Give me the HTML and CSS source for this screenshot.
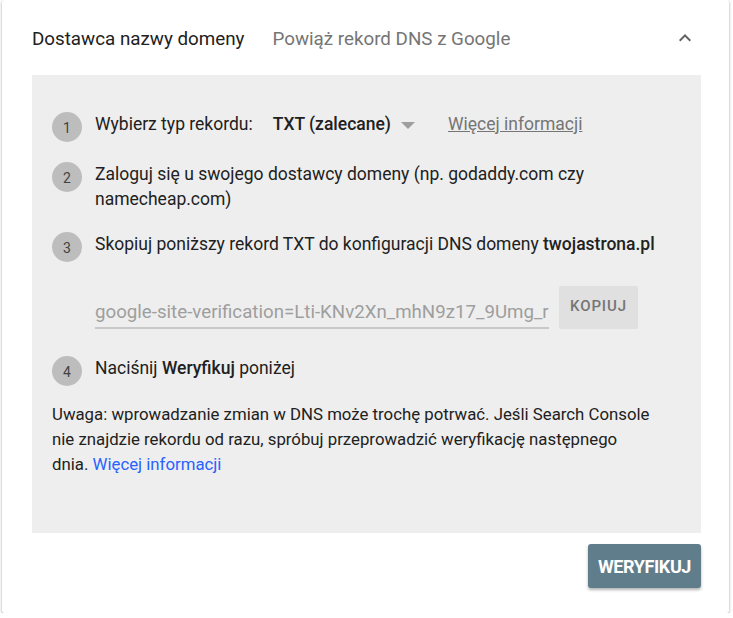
FILE: index.html
```html
<!DOCTYPE html>
<html lang="pl">
<head>
<meta charset="utf-8">
<link rel="stylesheet" href="styles.css">
</head>
<body>
<div class="card">
  <div class="header">
    <span class="title">Dostawca nazwy domeny</span>
    <span class="subtitle">Powiąż rekord DNS z Google</span>
    <svg class="chevron" width="24" height="24" viewBox="0 0 24 24"><path d="M7.41 15.41L12 10.83l4.59 4.58L18 14l-6-6-6 6z" fill="#616161"/></svg>
  </div>
  <div class="panel">
    <div class="step">
      <span class="num">1</span>
      <div class="step-body row">
        <span>Wybierz typ rekordu:</span>
        <span class="select"><b class="med">TXT (zalecane)</b><span class="tri"></span></span>
        <a class="more">Więcej informacji</a>
      </div>
    </div>
    <div class="step">
      <span class="num">2</span>
      <div class="step-body">Zaloguj się u swojego dostawcy domeny (np. godaddy.com czy namecheap.com)</div>
    </div>
    <div class="step step3">
      <span class="num">3</span>
      <div class="step-body">
        <div>Skopiuj poniższy rekord TXT do konfiguracji DNS domeny <b class="med">twojastrona.pl</b></div>
        <div class="copy-row">
          <div class="field"><span class="field-text">google-site-verification=Lti-KNv2Xn_mhN9z17_9Umg_r</span></div>
          <button class="copy">KOPIUJ</button>
        </div>
      </div>
    </div>
    <div class="step step-last">
      <span class="num">4</span>
      <div class="step-body">Naciśnij <b class="med">Weryfikuj</b> poniżej</div>
    </div>
    <p class="note">Uwaga: wprowadzanie zmian w DNS może trochę potrwać. Jeśli Search Console nie znajdzie rekordu od razu, spróbuj przeprowadzić weryfikację następnego dnia. <a class="link">Więcej informacji</a></p>
  </div>
  <div class="actions">
    <button class="verify">WERYFIKUJ</button>
  </div>
</div>
</body>
</html>
```
FILE: styles.css
```css
* { box-sizing: border-box; }
body {
  margin: 0;
  background: #ffffff;
  font-family: Roboto, "Noto Sans", sans-serif;
  color: #212121;
}
.card {
  margin-left: 2px;
  width: 727px;
  height: 613px;
  background: #fff;
  box-shadow: 0 1px 3px rgba(0,0,0,0.35), 0 1px 1px rgba(0,0,0,0.12);
  padding: 0 28px 0 30px;
  border-radius: 2px;
}
.header {
  height: 75px;
  display: flex;
  align-items: center;
  font-size: 18.8px;
  padding-top: 3px;
}
.title { color: #212121; }
.subtitle { color: #757575; margin-left: 28px; }
.chevron { margin-left: auto; margin-right: 4px; margin-top: -2px; }
.panel {
  background: #eeeeee;
  height: 458px;
  padding: 37px 20px 0 20px;
  font-size: 17.5px;
  line-height: 25px;
  color: #212121;
}
.step {
  display: flex;
  align-items: flex-start;
  margin-bottom: 20px;
}
.step-last { margin-bottom: 16px; }
.num {
  flex: none;
  width: 30px;
  height: 30px;
  border-radius: 50%;
  background: #bdbdbd;
  color: #424242;
  font-size: 14px;
  display: flex;
  align-items: center;
  justify-content: center;
  padding-top: 3px;
  margin-right: 13px;
}
.row { display: flex; align-items: center; height: 25px; }
.med { font-weight: 500; color: #212121; }
.select { display: inline-flex; align-items: center; margin-left: 20px; }
.tri {
  width: 0; height: 0;
  border-left: 7px solid transparent;
  border-right: 7px solid transparent;
  border-top: 7px solid #9e9e9e;
  margin-left: 10px;
  margin-top: 2px;
}
.more {
  margin-left: 33px;
  color: #757575;
  text-decoration: underline;
}
.copy-row {
  display: flex;
  align-items: flex-start;
  margin-top: 29px;
  margin-bottom: 7px;
}
.field {
  width: 454px;
  overflow: hidden;
  white-space: nowrap;
  color: #9e9e9e;
  font-size: 18.7px;
  padding-top: 14px;
  height: 43px;
  border-bottom: 2px solid #c8c8c8;
}
.copy {
  margin-left: 10px;
  width: 79px;
  height: 43px;
  border: none;
  border-radius: 2px;
  background: #e0e0e0;
  color: #757575;
  font-family: Roboto, sans-serif;
  font-weight: 500;
  font-size: 15px;
  letter-spacing: 0.9px;
  padding: 0 0 4px 0;
}
.note {
  margin: 0;
  width: 600px;
  font-size: 16.8px;
  line-height: 25px;
}
.link { color: #2962ff; }
.actions {
  display: flex;
  justify-content: flex-end;
  padding-top: 11px;
}
.verify {
  width: 113px;
  height: 44px;
  border: none;
  border-radius: 3px;
  background: #607d8b;
  color: #fff;
  font-family: Roboto, sans-serif;
  font-weight: 700;
  font-size: 18px;
  letter-spacing: -0.4px;
  padding: 0;
  box-shadow: 0 2px 3px rgba(0,0,0,0.3);
}
```
